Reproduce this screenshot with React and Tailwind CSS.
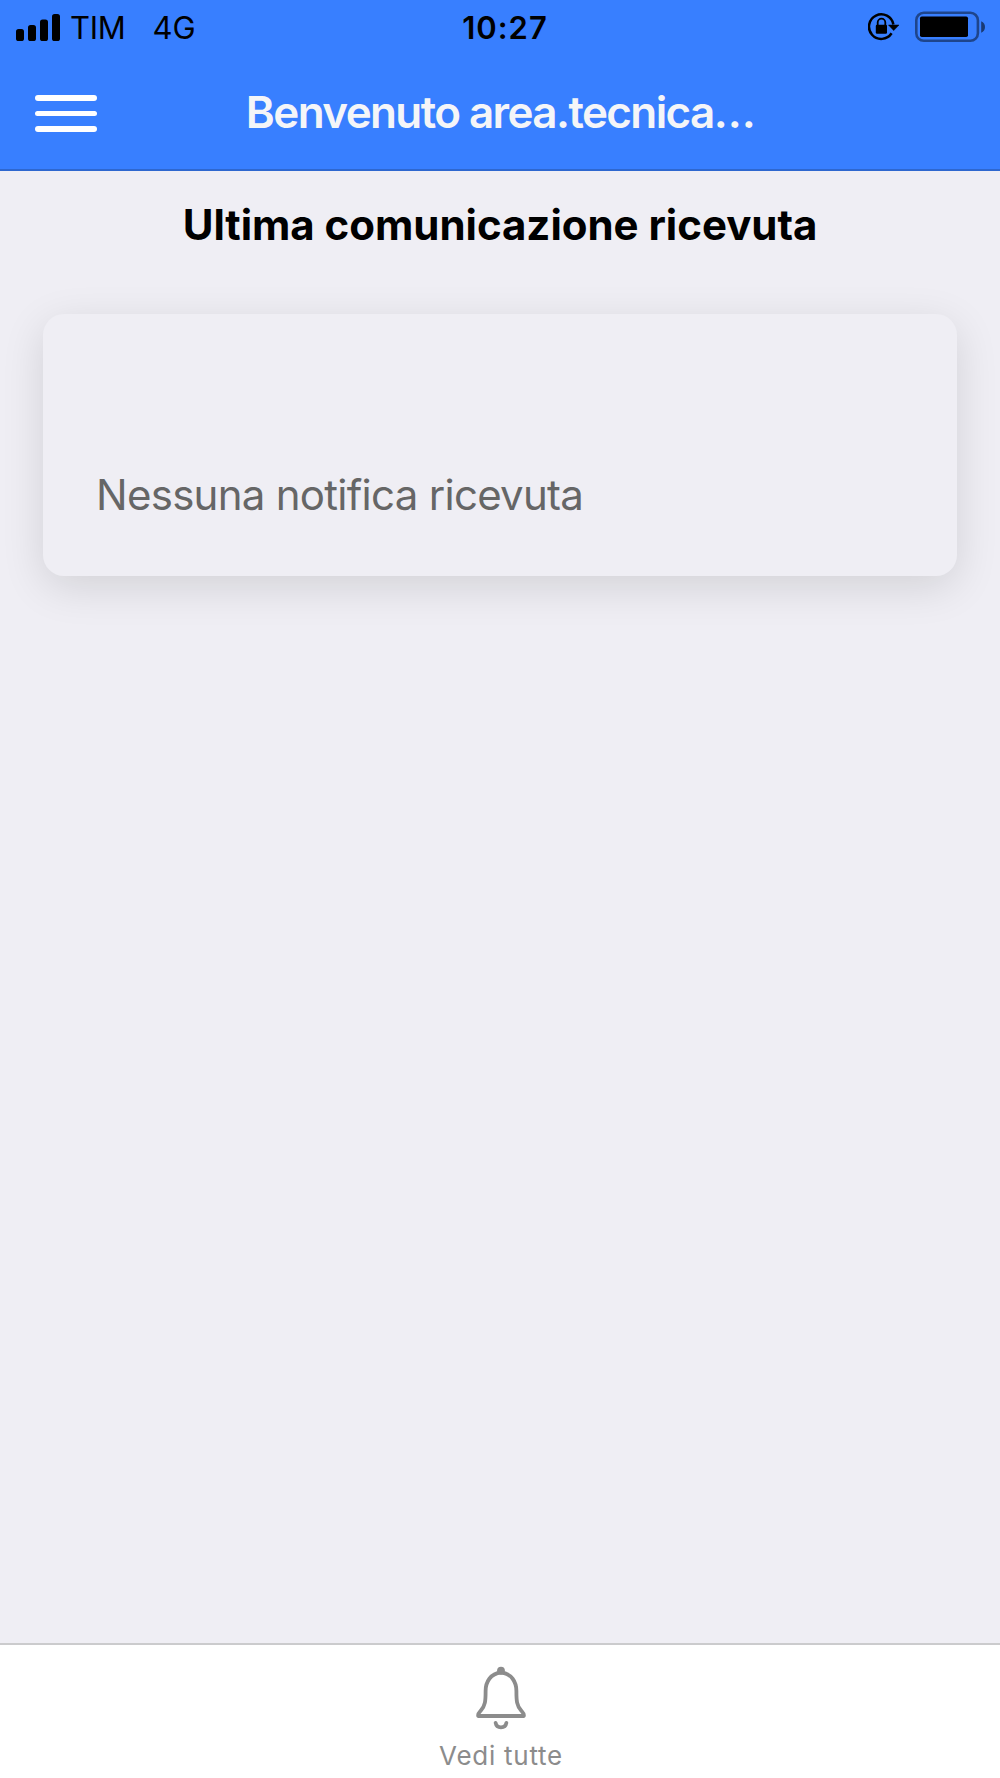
const SignalIcon = () => (
  <svg width="44" height="27" viewBox="0 0 44 27" fill="#000">
    <rect x="0" y="15" width="8" height="12" rx="2.6" />
    <rect x="12" y="11" width="8" height="16" rx="2.6" />
    <rect x="24" y="5.5" width="8" height="21.5" rx="2.6" />
    <rect x="36" y="0" width="8" height="27" rx="2.6" />
  </svg>
);

const RotationLockIcon = () => (
  <svg width="32" height="30" viewBox="0 0 32 30" fill="none" stroke="#000">
    <path d="M25.4 12.5 A12.3 12.3 0 1 0 23.6 21.3" strokeWidth="2.5" />
    <path d="M20.5 13 H31 L25.7 18.6 Z" fill="#000" stroke="#000" strokeWidth="0.5" />
    <rect x="7.8" y="12.8" width="11.2" height="9" rx="1.2" fill="#000" stroke="none" />
    <path d="M9.7 14 V10.5 a3.8 3.8 0 0 1 7.6 0 V14" strokeWidth="1.8" />
  </svg>
);

const BatteryIcon = () => (
  <svg width="72" height="32" viewBox="0 0 72 32">
    <rect x="1.3" y="1.8" width="61.6" height="28" rx="7.5" fill="none" stroke="#000" strokeOpacity="0.45" strokeWidth="2.6" />
    <rect x="5" y="5.5" width="48" height="20.5" rx="1.8" fill="#000" />
    <path d="M66.2 10.3 C71.3 12 71.3 20 66.2 21.7 Z" fill="#000" fillOpacity="0.55" />
  </svg>
);

const BellIcon = () => (
  <svg width="52" height="64" viewBox="0 0 52 64" fill="none" stroke="#8c8c8c" strokeWidth="3.8" strokeLinecap="round" strokeLinejoin="round">
    <path d="M26 6.5 C15.5 7.5 10.6 16 10.6 25 C10.6 34.5 10.4 40 5.6 44.8 C3.4 47.2 2.7 48.2 3.2 50 H48.8 C49.3 48.2 48.6 47.2 46.4 44.8 C41.6 40 41.4 34.5 41.4 25 C41.4 16 36.5 7.5 26 6.5 Z" />
    <circle cx="26" cy="4.6" r="3.9" fill="#8c8c8c" stroke="none" />
    <path d="M20.6 56.8 C21.6 63 30.4 63 31.4 56.8" />
  </svg>
);

const StatusBar = () => (
  <div className="grid h-[54px] grid-cols-3 items-center pr-[13px] pl-4 text-[31px] leading-none text-black">
    <div className="flex items-center">
      <SignalIcon />
      <span className="ml-[10px] tracking-[-0.3px]">TIM</span>
      <span className="ml-[27px] tracking-[0px]">4G</span>
    </div>
    <span className="pl-[7px] text-center font-semibold tracking-[1px]">10:27</span>
    <div className="flex items-center justify-end gap-[15px]">
      <RotationLockIcon />
      <BatteryIcon />
    </div>
  </div>
);

const Header = () => (
  <header className="h-[171px] border-b-2 border-[#2e67cf] bg-[#387fff]">
    <StatusBar />
    <div className="grid h-[117px] grid-cols-[200px_1fr_200px] items-center">
      <button className="mt-[2px] ml-[34.5px] flex w-[62px] flex-col gap-[10px]" aria-label="Menu">
        <span className="h-[5.5px] w-full rounded-full bg-white" />
        <span className="h-[5.5px] w-full rounded-full bg-white" />
        <span className="h-[5.5px] w-full rounded-full bg-white" />
      </button>
      <h1 className="-mt-[2px] text-center text-[44px] leading-none font-semibold tracking-[-1.6px] whitespace-nowrap text-[#f4f5f8]">
        Benvenuto area.tecnica…
      </h1>
    </div>
  </header>
);

const NotificationCard = ({ message }) => (
  <div className="mx-[43px] mt-[61px] flex h-[262px] items-end rounded-[21px] bg-[#efeef4] px-[53px] pb-[54px] shadow-[0_11px_43px_rgba(0,0,0,0.12)]">
    <p className="text-[42px] leading-[54px] tracking-[-0.72px] text-[#666666]">{message}</p>
  </div>
);

const App = () => {
  return (
    <div className="flex h-[1778px] w-[1000px] flex-col overflow-hidden bg-[#efeef4] font-['Inter',sans-serif]">
      <Header />
      <main className="flex-1 pt-[26px]">
        <h2 className="text-center text-[42px] leading-[56px] font-bold tracking-[-0.03px] text-black">
          Ultima comunicazione ricevuta
        </h2>
        <NotificationCard message="Nessuna notifica ricevuta" />
      </main>
      <footer className="flex h-[135px] flex-col items-center border-t-2 border-[#cbcbcd] bg-white pt-[21px] pl-[2px] text-[#8c8c8c]">
        <BellIcon />
        <span className="mt-[10px] text-[26px] leading-[32px] tracking-[0.75px]">Vedi tutte</span>
      </footer>
    </div>
  );
};

export default App;
